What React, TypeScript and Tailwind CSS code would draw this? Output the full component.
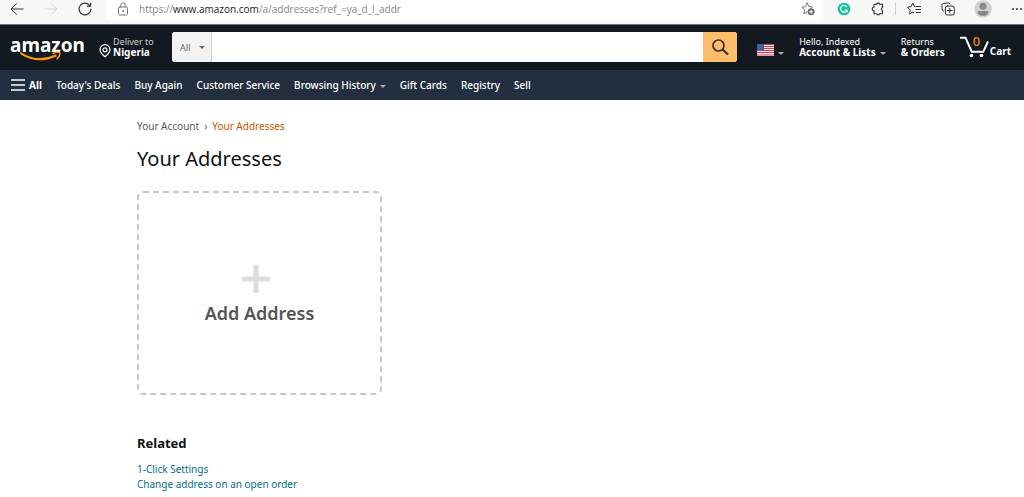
import React from 'react';

const navLinks = ["Today's Deals", 'Buy Again', 'Customer Service', 'Browsing History', 'Gift Cards', 'Registry', 'Sell'];

const Caret = ({ className = '' }: { className?: string }) => (
  <svg viewBox="0 0 6 3" className={`w-[6px] h-[3px] fill-current ${className}`} aria-hidden="true">
    <path d="M0 0h6L3 3z" />
  </svg>
);

const iconProps = {
  viewBox: '0 0 14 14',
  fill: 'none',
  stroke: 'currentColor',
  strokeLinecap: 'round' as const,
  strokeLinejoin: 'round' as const,
};

const BrowserBar = () => (
  <div className="flex h-[25px] items-start border-b border-[#70757a] bg-[#f7f7f7] pl-[10px] pr-[1px] text-[#333]">
    <div className="flex h-[18px] items-center gap-5 pr-[14px]">
      <button aria-label="Back">
        <svg {...iconProps} className="block size-[14px]"><path d="M13.2 7H1.2M6.5 1.7 1.2 7l5.3 5.3" /></svg>
      </button>
      <button aria-label="Forward" className="text-[#d2d2d2]">
        <svg {...iconProps} className="block size-[14px]"><path d="M.8 7h12M7.5 1.7 12.8 7l-5.3 5.3" /></svg>
      </button>
      <button aria-label="Refresh">
        <svg {...iconProps} strokeWidth="1.2" className="block size-[14px]">
          <path d="M12.9 7.2A5.9 5.9 0 1 1 11.2 2.9L12.4 4M12.6 1v3.2H9.4" />
        </svg>
      </button>
    </div>
    <div className="flex h-5 min-w-0 flex-1 items-center rounded-b-sm bg-white pb-[2px] pl-[10px] pr-2">
      <svg {...iconProps} className="size-[14px] shrink-0 text-[#777]">
        <rect x="2.5" y="5" width="9" height="8" rx="1.2" />
        <path d="M4.8 5V3a2.2 2.2 0 0 1 4.4 0v2" />
        <circle cx="7" cy="9" r=".5" fill="currentColor" />
      </svg>
      <div className="flex-1 whitespace-nowrap pl-[9px] font-['Open_Sans',sans-serif] text-[10px] leading-4 text-[#858585]">
        https://<span className="text-[#222]">www.amazon.com</span>/a/addresses?ref_=ya_d_l_addr
      </div>
      <button aria-label="Add to favorites" className="text-[#777]">
        <svg {...iconProps} className="block size-[14px]">
          <path d="m6.2 1 1.6 3.4 3.7.5-2.2 2.2M6.2 9.9l-3.3 1.8.6-3.8L.8 5.2l3.7-.6L6.2 1" />
          <circle cx="10.1" cy="9.8" r="3.2" fill="#666" stroke="#666" strokeWidth=".6" />
          <path d="M10.1 8.2v3.2M8.5 9.8h3.2" stroke="white" />
        </svg>
      </button>
    </div>
    <div className="flex h-[18px] items-center">
      <button aria-label="Grammarly" className="ml-[14px]">
        <svg {...iconProps} className="block size-[14px]">
          <circle cx="7" cy="7" r="6.3" fill="#15c39a" stroke="none" />
          <path d="M9.7 4.6A3.4 3.4 0 1 0 10.2 8H8.1M10.2 8v1.7" stroke="white" strokeWidth="1.2" />
        </svg>
      </button>
      <button aria-label="Extensions" className="ml-5">
        <svg {...iconProps} strokeWidth="1.1" className="block size-[14px]">
          <path d="M3 2.3h2.6a1.7 1.7 0 0 1 3.2 0h2.7v3.1a1.7 1.7 0 0 0 0 3.2v3.1H8.8a1.7 1.7 0 0 1-3.2 0H3V8.8a1.8 1.8 0 1 1 0-3.6z" />
        </svg>
      </button>
      <div className="ml-[10px] h-3 w-px bg-[#cfcfcf]" />
      <button aria-label="Favorites" className="ml-[11px]">
        <svg {...iconProps} className="block size-[14px]">
          <path d="M8.3 4.7 7.5 4.6 5.7 1 4.1 4.6l-3.6.6 2.7 2.7-.6 4 3.2-1.8 1 .6M9.3 4.5h4.2M8.7 7.5h4.8M9.3 10.5h4.2" />
        </svg>
      </button>
      <button aria-label="Collections" className="ml-5">
        <svg {...iconProps} className="block size-[14px]">
          <path d="M2.6 9.3A2 2 0 0 1 1.3 8L.8 3.7A2 2 0 0 1 2.5 1.5L7 .9a2 2 0 0 1 2 1.2" />
          <rect x="4.3" y="4" width="9" height="9" rx="2" />
          <path d="M8.8 6.2v4.6M6.5 8.5h4.6" />
        </svg>
      </button>
      <button aria-label="Profile" className="ml-[19px]">
        <svg viewBox="0 0 18 18" className="block size-[18px]">
          <circle cx="9" cy="9" r="8.7" fill="#d3d0ce" />
          <circle cx="9" cy="6.3" r="3.5" fill="#8b8785" />
          <path d="M3.5 12.5q0-1.5 1.5-1.5h8q1.5 0 1.5 1.5Q13 16 9 16t-5.5-3.5" fill="#8b8785" />
        </svg>
      </button>
      <button aria-label="Settings and more" className="ml-[19px]">
        <svg viewBox="0 0 12 14" className="block h-[14px] w-3 fill-current">
          <circle cx="2" cy="7" r="1" /><circle cx="6" cy="7" r="1" /><circle cx="10" cy="7" r="1" />
        </svg>
      </button>
    </div>
  </div>
);

const Flag = () => (
  <svg viewBox="0 0 17 12" className="h-3 w-[17px]" aria-hidden="true">
    <path fill="#f3e4e6" d="M0 0h17v12H0z" />
    <path stroke="#cf3f56" d="M0 .5h17M0 2.5h17M0 4.5h17M0 6.5h17M0 8.5h17M0 11h17" />
    <path fill="#3f5694" d="M0 0h7v6.5H0z" />
    <path stroke="#8f9dc4" strokeWidth=".6" strokeDasharray=".7 1" d="M.7 1.5h6M1.2 3.2h5M.7 5h6" />
  </svg>
);

const Header = () => (
  <header className="flex h-[45px] items-center bg-[#131921] pb-[1px] pl-[10px] pr-[13px] text-[10px] leading-[11px] text-white">
    <a href="#" className="relative block w-[75px] pb-[5px] text-[19px] font-bold leading-6">
      amazon
      <svg viewBox="0 0 42 11" className="absolute left-[10px] top-[18px] h-[11px] w-[42px]" aria-hidden="true">
        <path d="M1 2.3Q17 12.8 35.5 4.7" fill="none" stroke="#ff9900" strokeWidth="2.2" strokeLinecap="round" />
        <path d="M33 2.5q5-2.3 6.8-.7 .7 3-2.8 6" fill="none" stroke="#ff9900" strokeWidth="1.4" strokeLinecap="round" />
      </svg>
    </a>
    <a href="#" className="ml-[14px] flex w-[73px] items-end">
      <svg viewBox="0 0 12 14" className="mr-[2px] h-[14px] w-3 shrink-0" fill="none" stroke="white" strokeWidth="1.2">
        <path d="M6 12.8C3.5 10.5 1 8.5 1 5.7a5 5 0 0 1 10 0c0 2.8-2.5 4.8-5 7.1z" />
        <circle cx="6" cy="5.8" r="2" />
      </svg>
      <span className="whitespace-nowrap">
        <span className="block text-[9px] leading-[11px] text-[#ccc]">Deliver to</span>
        <span className="block font-bold">Nigeria</span>
      </span>
    </a>
    <form className="flex h-[30px] min-w-0 flex-1 overflow-hidden rounded-[3px] bg-white" onSubmit={e => e.preventDefault()}>
      <div className="relative w-10 border-r border-[#cdcdcd] bg-[#f3f3f3] text-[#666]">
        <select aria-label="Search in" className="h-full w-full appearance-none pl-2 text-[9px]">
          <option>All</option>
        </select>
        <Caret className="pointer-events-none absolute right-[6px] top-[14px]" />
      </div>
      <input type="text" aria-label="Search" className="min-w-0 flex-1 px-2 text-black outline-none" />
      <button aria-label="Go" className="flex w-[34px] items-center justify-center bg-[#febd69] text-[#333]">
        <svg viewBox="0 0 18 18" className="size-[18px]" fill="none" stroke="currentColor" strokeWidth="1.7">
          <circle cx="7.5" cy="7.5" r="5.5" />
          <path d="m11.5 11.5 5.5 5" strokeWidth="2.2" />
        </svg>
      </button>
    </form>
    <button aria-label="Choose a language" className="ml-5 mt-[6px] flex items-center gap-1">
      <Flag />
      <Caret className="mt-[6px] text-[#a7acb2]" />
    </button>
    <a href="#" className="ml-[15px] whitespace-nowrap">
      <span className="block text-[9px] leading-[11px]">Hello, Indexed</span>
      <span className="flex items-center gap-1 font-bold">
        Account &amp; Lists
        <Caret className="mt-[2px] text-[#a7acb2]" />
      </span>
    </a>
    <a href="#" className="ml-[15px] whitespace-nowrap">
      <span className="block text-[9px] leading-[11px]">Returns</span>
      <span className="block font-bold">&amp; Orders</span>
    </a>
    <a href="#" className="relative ml-[15px] flex items-end font-bold">
      <svg viewBox="0 0 29 22" className="mr-px h-[22px] w-[29px]" fill="none" stroke="white" strokeWidth="2">
        <path d="M0 1.8h5.5l6.3 14h11.4L28 5.5" />
        <circle cx="11.5" cy="19.5" r="1.8" fill="white" stroke="none" />
        <circle cx="21.5" cy="19.5" r="1.8" fill="white" stroke="none" />
      </svg>
      <span className="absolute left-[13px] top-0 text-[13px] leading-[11px] font-medium text-[#f08804]">0</span>
      <span className="pb-[1px]">Cart</span>
    </a>
  </header>
);

const NavBar = () => (
  <nav className="flex h-[30px] items-center gap-[14px] whitespace-nowrap bg-[#232f3e] pl-[11px] text-[10px] font-medium text-white">
    <button className="flex items-center gap-1 font-bold">
      <svg viewBox="0 0 14 12" className="h-3 w-[14px]" stroke="white" strokeWidth="1.5">
        <path d="M0 1h14M0 6h14M0 11h14" />
      </svg>
      All
    </button>
    {navLinks.map(label => (
      <a key={label} href="#" className="flex items-center gap-1">
        {label}
        {label === 'Browsing History' && <Caret className="mt-[2px] text-[#a7acb2]" />}
      </a>
    ))}
  </nav>
);

function App() {
  return (
    <div className="min-h-screen bg-white font-['Noto_Sans','Open_Sans',sans-serif] text-[#0f1111]">
      <BrowserBar />
      <Header />
      <NavBar />

      <main className="mx-auto max-w-[750px] pt-[19px] text-[10px] leading-[15px]">
        {/* Breadcrumb */}
        <div className="flex gap-[5px] text-[#565959]">
          <a href="#">Your Account</a>
          <span>›</span>
          <span className="text-[#c45500]">Your Addresses</span>
        </div>
        <h1 className="mt-[11px] text-[20px] leading-7">Your Addresses</h1>

        <a
          href="#"
          className="mt-[18px] flex h-[204px] w-[245px] flex-col items-center justify-center rounded-md border-2 border-dashed border-[#c7c7c7] pt-1 text-[#555]"
        >
          <svg viewBox="0 0 28 28" className="mr-2 size-7" stroke="#ddd" strokeWidth="5" aria-hidden="true">
            <path d="M14 0v28M0 14h28" />
          </svg>
          <span className="mt-2 text-[18px] font-semibold leading-6">Add Address</span>
        </a>

        {/* Related links */}
        <h2 className="mt-[38px] text-[13px] font-bold leading-5">Related</h2>
        <ul className="mt-[9px] text-[#007185]">
          <li><a href="#">1-Click Settings</a></li>
          <li><a href="#">Change address on an open order</a></li>
        </ul>
      </main>
    </div>
  );
}

export default App;
